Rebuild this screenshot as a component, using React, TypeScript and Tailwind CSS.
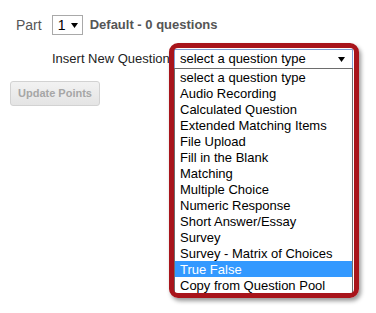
const options = [
  "select a question type",
  "Audio Recording",
  "Calculated Question",
  "Extended Matching Items",
  "File Upload",
  "Fill in the Blank",
  "Matching",
  "Multiple Choice",
  "Numeric Response",
  "Short Answer/Essay",
  "Survey",
  "Survey - Matrix of Choices",
  "True False",
  "Copy from Question Pool",
];

function Caret() {
  return (
    <svg width="7" height="5" viewBox="0 0 7 5">
      <path d="M0 0h7L3.5 5z" fill="#000" />
    </svg>
  );
}

export default function App() {
  return (
    <div className="relative h-[313px] w-[376px] overflow-hidden bg-white font-['Liberation_Sans',Arial,sans-serif]">
      {/* part row */}
      <div className="flex h-[20px] items-center pl-[16px] pt-0 mt-[15px]">
        <span className="text-[14px] text-[#555]">Part</span>
        <div className="ml-[10px] flex h-[20px] w-[31px] items-center border border-[#a9a9a9] bg-white pl-[5px]">
          <span className="text-[14px] text-black">1</span>
          <span className="ml-[6px] flex">
            <Caret />
          </span>
        </div>
        <span className="ml-[7px] text-[13px] font-bold text-[#555]">
          Default - 0 questions
        </span>
      </div>

      {/* insert row */}
      <div className="mt-[14px] flex h-[20px] items-center pl-[52px]">
        <span className="w-[122px] whitespace-nowrap text-[13px] text-[#222]">
          Insert New Question
        </span>
        <div className="relative h-[20px] w-[179px]">
          <div className="flex h-[20px] items-center justify-between border border-[#7f9fd4] bg-white pl-[5px] pr-[7px]">
            <span className="text-[13px] text-black">select a question type</span>
            <Caret />
          </div>
          <div className="absolute left-0 top-[19px] z-10 w-[179px] border border-[#6d6d6d] bg-white">
            {options.map((o) => (
              <div
                key={o}
                className={
                  o === "True False"
                    ? "flex h-[16px] items-center bg-[#3399ff] pl-[5px] text-[13px] leading-none text-white"
                    : "flex h-[16px] items-center pl-[5px] text-[13px] leading-none text-black"
                }
              >
                {o}
              </div>
            ))}
          </div>
          <div className="pointer-events-none absolute -left-[5px] -top-[6px] z-20 h-[255px] w-[190px] rounded-[9px] border-[5px] border-[#a8141b] shadow-[2px_3px_4px_rgba(0,0,0,0.4)]" />
        </div>
      </div>

      <button className="ml-[10px] mt-[12px] flex h-[25px] w-[90px] items-center justify-center rounded-[3px] border border-[#d2d2d2] bg-gradient-to-b from-[#f2f2f2] to-[#e4e4e4] text-[11px] font-bold text-[#a6a6a6]">
        Update Points
      </button>
    </div>
  );
}
